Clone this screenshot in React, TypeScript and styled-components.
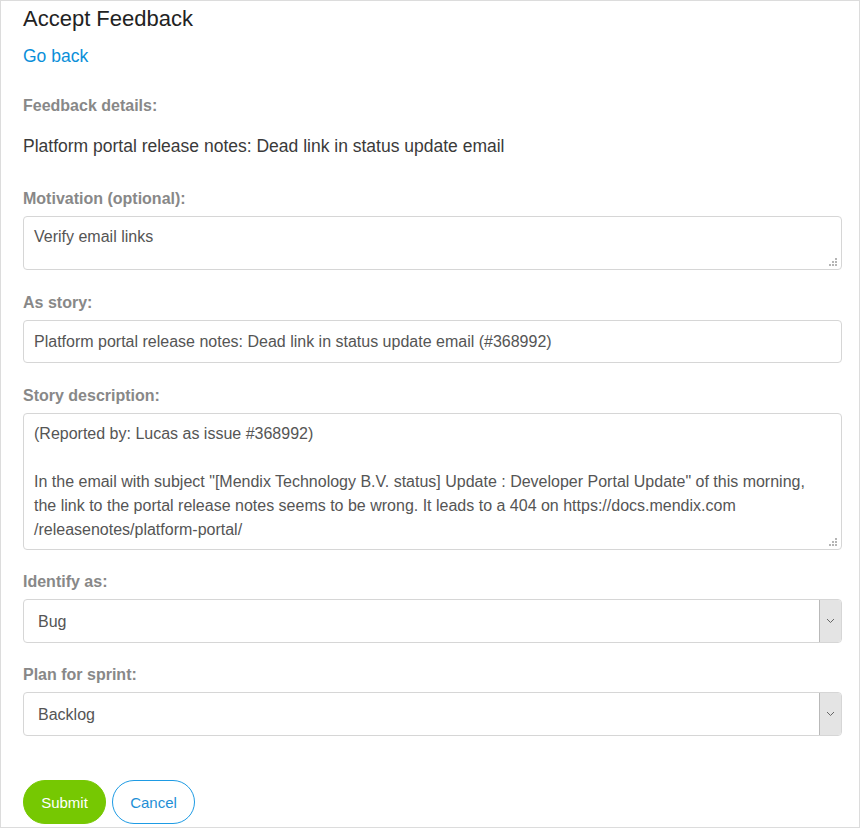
import React from "react";
import styled, { createGlobalStyle } from "styled-components";

const Global = createGlobalStyle`
  html, body { margin: 0; padding: 0; background: #fff; }
  body { font-family: "Liberation Sans", Arial, sans-serif; }
  * { box-sizing: border-box; }
`;

const Frame = styled.div`
  width: 860px;
  height: 828px;
  border: 1px solid #dcdcdc;
  padding: 5px 17px 0 22px;
  overflow: hidden;
  display: flex;
  flex-direction: column;
`;

const Title = styled.h1`
  margin: 0;
  font-size: 22px;
  line-height: 26px;
  font-weight: normal;
  color: #222;
`;

const BackLink = styled.a`
  margin-top: 14px;
  font-size: 17.5px;
  line-height: 20px;
  color: #0a8fd9;
  text-decoration: none;
  align-self: flex-start;
  cursor: pointer;
`;

const Label = styled.label`
  display: block;
  font-size: 16px;
  line-height: 20px;
  font-weight: bold;
  color: #888;
  margin-bottom: 7px;
`;

const Group = styled.div<{ $top: number }>`
  margin-top: ${(p) => p.$top}px;
  display: flex;
  flex-direction: column;
`;

const Detail = styled.div`
  margin-top: 12px;
  font-size: 17.5px;
  line-height: 22px;
  color: #3a3a3a;
`;

const fieldBase = `
  width: 100%;
  border: 1px solid #d6d6d6;
  border-radius: 4px;
  background: #fff;
  font-family: "Liberation Sans", Arial, sans-serif;
  font-size: 16px;
  color: #555;
  outline: none;
`;

const AreaWrap = styled.div`
  position: relative;
`;

const TextArea = styled.textarea<{ $h: number }>`
  ${fieldBase}
  display: block;
  height: ${(p) => p.$h}px;
  padding: 8px 10px;
  line-height: 24px;
  resize: none;
  overflow: hidden;
`;

const Grip = styled.svg`
  position: absolute;
  right: 4px;
  bottom: 3px;
  width: 9px;
  height: 9px;
`;

const Input = styled.input`
  ${fieldBase}
  display: block;
  height: 43px;
  padding: 0 10px;
`;

const SelectWrap = styled.div`
  position: relative;
`;

const Select = styled.select`
  ${fieldBase}
  display: block;
  height: 44px;
  padding: 0 34px 0 14px;
  appearance: none;
  -webkit-appearance: none;
`;

const Arrow = styled.span`
  position: absolute;
  top: 1px;
  right: 1px;
  bottom: 1px;
  width: 22px;
  background: #e4e4e4;
  border-left: 1px solid #b9b9b9;
  border-radius: 0 3px 3px 0;
  display: flex;
  align-items: center;
  justify-content: center;
  pointer-events: none;
`;

const Buttons = styled.div`
  margin-top: 44px;
  display: flex;
  gap: 6px;
`;

const Button = styled.button<{ $primary?: boolean }>`
  height: 44px;
  width: 83px;
  border-radius: 22px;
  font-family: "Liberation Sans", Arial, sans-serif;
  font-size: 15px;
  cursor: pointer;
  border: 1px solid ${(p) => (p.$primary ? "#76c802" : "#1e9be4")};
  background: ${(p) => (p.$primary ? "#76c802" : "#fff")};
  color: ${(p) => (p.$primary ? "#fff" : "#1e8fd6")};
`;

const GripIcon = () => (
  <Grip viewBox="0 0 9 9">
    {[
      [6, 0],
      [6, 3],
      [3, 3],
      [6, 6],
      [3, 6],
      [0, 6],
    ].map(([x, y], i) => (
      <rect key={i} x={x} y={y} width="2" height="2" fill="#b5b5b5" />
    ))}
  </Grip>
);

const Chevron = () => (
  <svg width="9" height="6" viewBox="0 0 9 6">
    <path d="M1 1 L4.5 4.5 L8 1" fill="none" stroke="#666" strokeWidth="1" />
  </svg>
);

const description =
  "(Reported by: Lucas as issue #368992)\n\nIn the email with subject \"[Mendix Technology B.V. status] Update : Developer Portal Update\" of this morning,\nthe link to the portal release notes seems to be wrong. It leads to a 404 on https://docs.mendix.com\n/releasenotes/platform-portal/";

export default function App() {
  return (
    <>
      <Global />
      <Frame>
        <Title>Accept Feedback</Title>
        <BackLink>Go back</BackLink>

        <Group $top={30}>
          <Label>Feedback details:</Label>
          <Detail>Platform portal release notes: Dead link in status update email</Detail>
        </Group>

        <Group $top={32}>
          <Label>Motivation (optional):</Label>
          <AreaWrap>
            <TextArea $h={54} defaultValue="Verify email links" />
            <GripIcon />
          </AreaWrap>
        </Group>

        <Group $top={23}>
          <Label>As story:</Label>
          <Input defaultValue="Platform portal release notes: Dead link in status update email (#368992)" />
        </Group>

        <Group $top={23}>
          <Label>Story description:</Label>
          <AreaWrap>
            <TextArea $h={137} defaultValue={description} />
            <GripIcon />
          </AreaWrap>
        </Group>

        <Group $top={22}>
          <Label>Identify as:</Label>
          <SelectWrap>
            <Select defaultValue="Bug">
              <option>Bug</option>
              <option>Feature</option>
            </Select>
            <Arrow>
              <Chevron />
            </Arrow>
          </SelectWrap>
        </Group>

        <Group $top={22}>
          <Label>Plan for sprint:</Label>
          <SelectWrap>
            <Select defaultValue="Backlog">
              <option>Backlog</option>
            </Select>
            <Arrow>
              <Chevron />
            </Arrow>
          </SelectWrap>
        </Group>

        <Buttons>
          <Button $primary>Submit</Button>
          <Button>Cancel</Button>
        </Buttons>
      </Frame>
    </>
  );
}
